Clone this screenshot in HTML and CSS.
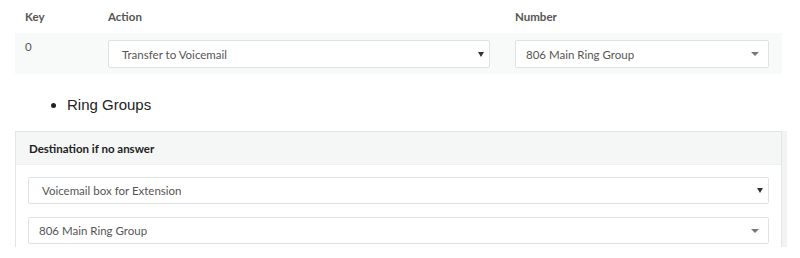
FILE: index.html
```html
<!DOCTYPE html>
<html lang="en">
<head>
    <meta charset="UTF-8">
    <title>Auto Attendant Keys</title>
    <link rel="stylesheet" href="styles.css">
</head>
<body>
    <div class="keys">
        <div class="keys-head">
            <div class="col-key">Key</div>
            <div class="col-action">Action</div>
            <div class="col-number">Number</div>
        </div>
        <div class="keys-row">
            <div class="col-key">0</div>
            <div class="col-action">
                <div class="select native action-select">
                    <span>Transfer to Voicemail</span>
                    <span class="arrow-native"></span>
                </div>
            </div>
            <div class="col-number">
                <div class="select styled number-select">
                    <span>806 Main Ring Group</span>
                    <span class="arrow-styled"></span>
                </div>
            </div>
        </div>
    </div>

    <ul class="notes">
        <li>Ring Groups</li>
    </ul>

    <div class="panel">
        <div class="panel-heading">Destination if no answer</div>
        <div class="panel-body">
            <div class="select native wide">
                <span>Voicemail box for Extension</span>
                <span class="arrow-native"></span>
            </div>
            <div class="select styled wide">
                <span>806 Main Ring Group</span>
                <span class="arrow-styled"></span>
            </div>
        </div>
    </div>
</body>
</html>
```

FILE: styles.css
```css
body {
    margin: 0;
    font-family: Lato, 'Open Sans', sans-serif;
    font-size: 11.5px;
    color: #555;
    background: #fff;
}

.keys {
    margin: 0 18px 0 15px;
}

.keys-head,
.keys-row {
    display: grid;
    grid-template-columns: 83px 407px 1fr;
}

.keys-head {
    height: 33px;
    align-items: center;
    font-weight: bold;
    color: #555;
}

.keys-head .col-key,
.keys-row .col-key {
    padding-left: 10px;
}

.keys-head .col-action,
.keys-row .col-action {
    padding-left: 10px;
}

.keys-head .col-number,
.keys-row .col-number {
    padding-left: 10px;
}

.keys-row {
    background-color: #f8f9f9;
    padding: 7px 0 6px;
}

.keys-row .col-key {
    padding-top: 0;
}

.select {
    display: flex;
    align-items: center;
    justify-content: space-between;
    box-sizing: border-box;
    height: 28px;
    background: #fff;
    border: 1px solid #dfe2e5;
    border-radius: 2px;
    color: #555;
}

.select.native {
    padding: 0 5px 0 13px;
}

.select.styled {
    padding: 0 9px 0 10px;
}

.action-select {
    width: 382px;
}

.number-select {
    width: 254px;
}

.arrow-native {
    width: 0;
    height: 0;
    border-left: 3px solid transparent;
    border-right: 3px solid transparent;
    border-top: 5px solid #333;
}

.arrow-styled {
    width: 0;
    height: 0;
    border-left: 4px solid transparent;
    border-right: 4px solid transparent;
    border-top: 4px solid #777;
}

.notes {
    margin: 22px 0 0;
    padding-left: 67px;
    font-family: 'Liberation Sans', Arial, sans-serif;
    font-size: 15px;
    color: #222;
}

.panel {
    margin: 18px 18px 0 15px;
    border: 1px solid #e2e5e7;
    border-bottom: none;
    box-shadow: 5px 0 0 #f1f3f4;
}

.panel-heading {
    height: 32px;
    display: flex;
    align-items: center;
    padding-left: 13px;
    background-color: #f5f6f6;
    border-bottom: 1px solid #eceeef;
    font-weight: bold;
    color: #222;
}

.panel-body {
    display: flex;
    flex-direction: column;
    gap: 13px;
    padding: 12px 12px 3px;
}

.select.wide {
    width: 100%;
    height: 27px;
}
```
